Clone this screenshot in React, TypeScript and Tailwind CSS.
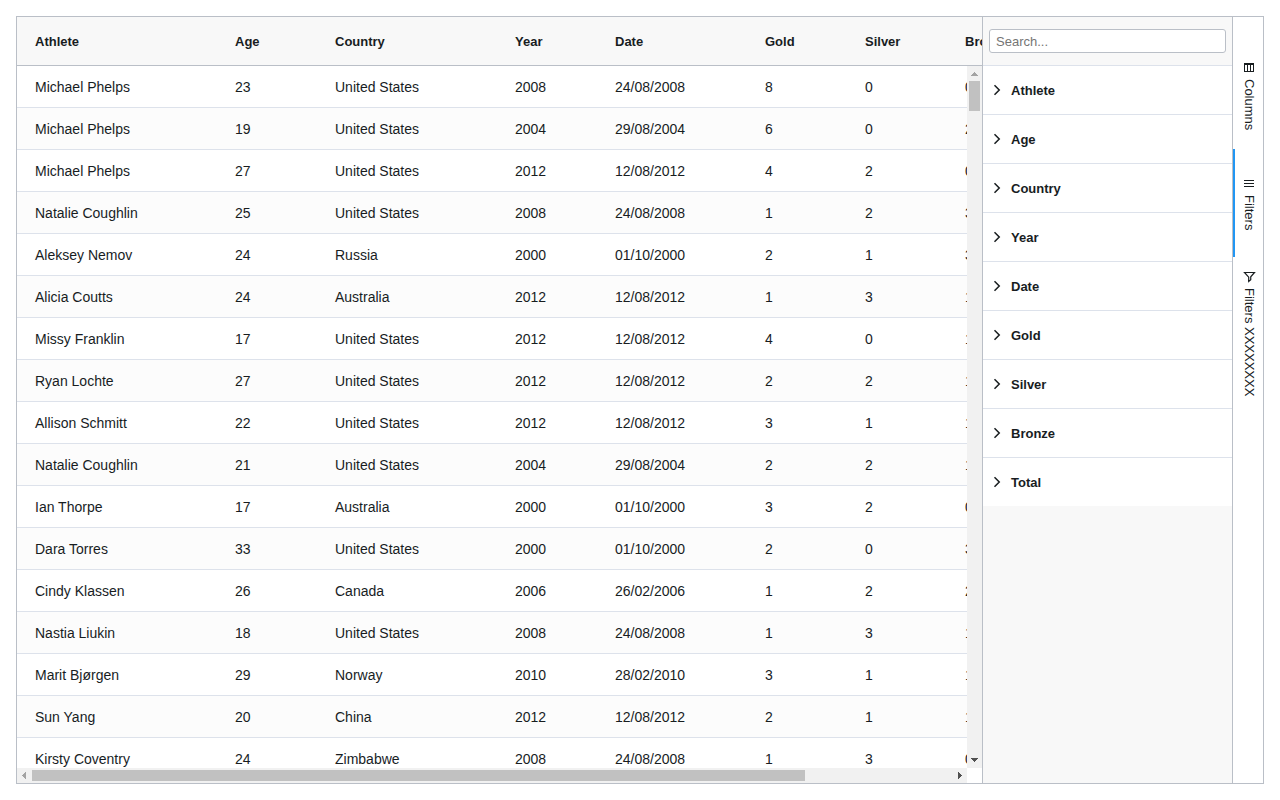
const rows = [
  ['Michael Phelps', 23, 'United States', 2008, '24/08/2008', 8, 0, 0],
  ['Michael Phelps', 19, 'United States', 2004, '29/08/2004', 6, 0, 2],
  ['Michael Phelps', 27, 'United States', 2012, '12/08/2012', 4, 2, 0],
  ['Natalie Coughlin', 25, 'United States', 2008, '24/08/2008', 1, 2, 3],
  ['Aleksey Nemov', 24, 'Russia', 2000, '01/10/2000', 2, 1, 3],
  ['Alicia Coutts', 24, 'Australia', 2012, '12/08/2012', 1, 3, 1],
  ['Missy Franklin', 17, 'United States', 2012, '12/08/2012', 4, 0, 1],
  ['Ryan Lochte', 27, 'United States', 2012, '12/08/2012', 2, 2, 1],
  ['Allison Schmitt', 22, 'United States', 2012, '12/08/2012', 3, 1, 1],
  ['Natalie Coughlin', 21, 'United States', 2004, '29/08/2004', 2, 2, 1],
  ['Ian Thorpe', 17, 'Australia', 2000, '01/10/2000', 3, 2, 0],
  ['Dara Torres', 33, 'United States', 2000, '01/10/2000', 2, 0, 3],
  ['Cindy Klassen', 26, 'Canada', 2006, '26/02/2006', 1, 2, 2],
  ['Nastia Liukin', 18, 'United States', 2008, '24/08/2008', 1, 3, 1],
  ['Marit Bjørgen', 29, 'Norway', 2010, '28/02/2010', 3, 1, 1],
  ['Sun Yang', 20, 'China', 2012, '12/08/2012', 2, 1, 1],
  ['Kirsty Coventry', 24, 'Zimbabwe', 2008, '24/08/2008', 1, 3, 0],
];

const columns = [
  { name: 'Athlete', width: 'w-[200px]' },
  { name: 'Age', width: 'w-[100px]' },
  { name: 'Country', width: 'w-[180px]' },
  { name: 'Year', width: 'w-[100px]' },
  { name: 'Date', width: 'w-[150px]' },
  { name: 'Gold', width: 'w-[100px]' },
  { name: 'Silver', width: 'w-[100px]' },
  { name: 'Bronze', width: 'w-[100px]' },
];

const filters = [...columns.map((c) => c.name), 'Total'];

function Arrow({ points, className }: { points: string; className: string }) {
  return (
    <svg
      className={`size-[15px] shrink-0 ${className}`}
      viewBox="0 0 15 15"
      fill="currentColor"
      shapeRendering="crispEdges"
      aria-hidden="true"
    >
      <polygon points={points} />
    </svg>
  );
}

function DataGrid() {
  return (
    <div className="flex min-w-0 flex-1 flex-col">
      <div className="relative min-h-0 flex-1 overflow-hidden">
        <table className="w-[1030px] table-fixed border-separate border-spacing-0 text-left text-sm">
          <thead>
            <tr className="h-[49px] bg-[#f8f8f8] text-[13px]">
              {columns.map((c) => (
                <th key={c.name} scope="col" className={`${c.width} border-b border-[#babfc7] pt-0.5 pr-0 pb-0 pl-[18px] font-bold`}>
                  {c.name}
                </th>
              ))}
            </tr>
          </thead>
          <tbody>
            {rows.map((row, i) => (
              <tr key={i} className="h-[42px] bg-white even:bg-[#fcfcfc]">
                {row.map((value, j) => (
                  <td key={j} className="border-b border-[#dde2eb] py-0 pr-0 pl-[18px] whitespace-nowrap">
                    {value}
                  </td>
                ))}
              </tr>
            ))}
          </tbody>
        </table>
        <div className="absolute top-[49px] right-0 bottom-0 flex w-[15px] flex-col items-center bg-[#f1f1f1]">
          <Arrow points="4,10 11,10 8,6 7,6" className="text-[#a3a3a3]" />
          <div className="h-[30px] w-[11px] bg-[#c1c1c1]" />
          <div className="flex-1" />
          <Arrow points="4,5 11,5 8,9 7,9" className="text-[#505050]" />
        </div>
      </div>
      <div className="mr-[15px] flex h-[15px] items-center bg-[#f1f1f1]">
        <Arrow points="9,4 9,11 5,8 5,7" className="text-[#a3a3a3]" />
        <div className="min-w-0 flex-1">
          <div className="h-[11px] w-[84%] bg-[#c1c1c1]" />
        </div>
        <Arrow points="6,4 6,11 10,8 10,7" className="text-[#505050]" />
      </div>
    </div>
  );
}

function FiltersPanel() {
  return (
    <section aria-label="Filters" className="w-[251px] shrink-0 border-x border-[#babfc7] bg-[#f8f8f8]">
      <div className="flex h-[49px] items-center border-b border-[#dde2eb] px-1.5">
        <input
          type="text"
          aria-label="Search filters"
          placeholder="Search..."
          className="h-6 w-full rounded-[3px] border border-[#babfc7] bg-white px-1.5 text-[13px] placeholder:text-[#757575]"
        />
      </div>
      <div className="divide-y divide-[#dde2eb] bg-white">
        {filters.map((name) => (
          <button key={name} type="button" aria-expanded="false" className="flex h-[49px] w-full items-center gap-1.5 px-1.5 text-[13px] font-bold last:h-12">
            <svg className="size-4" viewBox="0 0 16 16" fill="none" stroke="currentColor" strokeWidth="1.5" aria-hidden="true">
              <path d="M5.500 3.250 10.250 8l-4.750 4.750" />
            </svg>
            <span className="pt-0.5">{name}</span>
          </button>
        ))}
      </div>
    </section>
  );
}

const sideButtons = [
  {
    label: 'Columns',
    active: false,
    icon: <path d="M3 4h10v9H3zM4 6v6h2V6zM7 6v6h2V6zM10 6v6h2V6z" fillRule="evenodd" />,
  },
  { label: 'Filters', active: true, icon: <path d="M3 5h10v1H3zM3 8h10v1H3zM3 11h10v1H3z" /> },
  {
    label: 'Filters XXXXXXXX',
    active: false,
    icon: <path d="M3.500 4.500h10L9.750 8.800v3L7.700 13.400V9.200z" fill="none" stroke="currentColor" strokeWidth="1.200" />,
  },
];

function SideButtons() {
  return (
    <nav aria-label="Tool panels" className="flex w-[30px] shrink-0 flex-col pt-6">
      {sideButtons.map((b) => (
        <button
          key={b.label}
          type="button"
          aria-pressed={b.active}
          className={`flex min-h-[108px] w-full flex-col items-center justify-center gap-1 border-l-2 py-[11px] text-[13px] leading-4 ${b.active ? 'border-[#2196f3]' : 'border-transparent'}`}
        >
          <svg className="size-4" viewBox="0 0 16 16" fill="currentColor" aria-hidden="true">
            {b.icon}
          </svg>
          <span className="whitespace-nowrap [writing-mode:vertical-rl]">{b.label}</span>
        </button>
      ))}
    </nav>
  );
}

export default function App() {
  return (
    <main className="h-screen bg-white p-4 font-['Liberation_Sans',Arial,sans-serif] text-[#181d1f]">
      <div className="flex h-full overflow-hidden border border-[#babfc7]">
        <DataGrid />
        <FiltersPanel />
        <SideButtons />
      </div>
    </main>
  );
}
